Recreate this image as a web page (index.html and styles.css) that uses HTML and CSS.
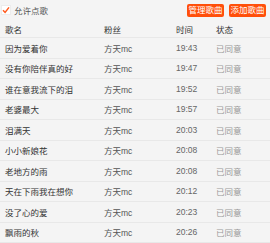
FILE: index.html
```html
<!DOCTYPE html>
<html lang="zh">
<head>
    <meta charset="UTF-8">
    <title>点歌列表</title>
    <link rel="stylesheet" href="styles.css">
</head>
<body>
    <div class="panel">
        <div class="toolbar">
            <label class="allow">
                <span class="check">
                    <svg width="8" height="8" viewBox="0 0 8 8"><path d="M1 4.2 L3.1 6.4 L7 1.4" fill="none" stroke="#ff5a1f" stroke-width="1.5"/></svg>
                </span>
                允许点歌
            </label>
            <div class="actions">
                <button class="btn">管理歌曲</button>
                <button class="btn">添加歌曲</button>
            </div>
        </div>

        <div class="row head">
            <span class="c-name">歌名</span>
            <span class="c-fan">粉丝</span>
            <span class="c-time">时间</span>
            <span class="c-state">状态</span>
        </div>
        <div class="row"><span class="c-name">因为爱着你</span><span class="c-fan">方天mc</span><span class="c-time">19:43</span><span class="c-state">已同意</span></div>
        <div class="row"><span class="c-name">没有你陪伴真的好</span><span class="c-fan">方天mc</span><span class="c-time">19:47</span><span class="c-state">已同意</span></div>
        <div class="row"><span class="c-name">谁在意我流下的泪</span><span class="c-fan">方天mc</span><span class="c-time">19:52</span><span class="c-state">已同意</span></div>
        <div class="row"><span class="c-name">老婆最大</span><span class="c-fan">方天mc</span><span class="c-time">19:57</span><span class="c-state">已同意</span></div>
        <div class="row"><span class="c-name">泪满天</span><span class="c-fan">方天mc</span><span class="c-time">20:03</span><span class="c-state">已同意</span></div>
        <div class="row"><span class="c-name">小小新娘花</span><span class="c-fan">方天mc</span><span class="c-time">20:08</span><span class="c-state">已同意</span></div>
        <div class="row"><span class="c-name">老地方的雨</span><span class="c-fan">方天mc</span><span class="c-time">20:08</span><span class="c-state">已同意</span></div>
        <div class="row"><span class="c-name">天在下雨我在想你</span><span class="c-fan">方天mc</span><span class="c-time">20:12</span><span class="c-state">已同意</span></div>
        <div class="row"><span class="c-name">没了心的爱</span><span class="c-fan">方天mc</span><span class="c-time">20:23</span><span class="c-state">已同意</span></div>
        <div class="row"><span class="c-name">飘雨的秋</span><span class="c-fan">方天mc</span><span class="c-time">20:26</span><span class="c-state">已同意</span></div>
    </div>
</body>
</html>
```

FILE: styles.css
```css
body {
    margin: 0;
    background: #f4f4f4;
    font-family: "Liberation Sans", "Noto Sans CJK SC", sans-serif;
    font-size: 8.5px;
    color: #333;
}

.panel {
    width: 270px;
    height: 243px;
    overflow: hidden;
}

.toolbar {
    display: flex;
    justify-content: space-between;
    align-items: center;
    height: 21px;
    padding: 0 4px 0 1px;
}

.allow {
    display: flex;
    align-items: center;
    gap: 3px;
    color: #555;
    margin-top: -1px;
}

.check {
    width: 8px;
    height: 8px;
    background: #fff;
    border: 1px solid #ececec;
    display: flex;
}

.actions {
    display: flex;
    gap: 5px;
    margin-top: -1px;
}

.btn {
    background: #ff4f0a;
    color: #fff;
    border: none;
    border-radius: 2px;
    height: 13px;
    width: 37px;
    padding: 0;
    font: inherit;
    line-height: 13px;
}

.row {
    display: flex;
    align-items: center;
    height: 19.5px;
    border-bottom: 1px solid #e8e8e8;
    padding-left: 5px;
}

.head {
    height: 16px;
}

.c-name { width: 99px; }
.c-fan { width: 72px; color: #555; }
.c-time { width: 40px; color: #666; }
.c-state { color: #999; }
.head .c-fan, .head .c-time, .head .c-state { color: #333; }
```
